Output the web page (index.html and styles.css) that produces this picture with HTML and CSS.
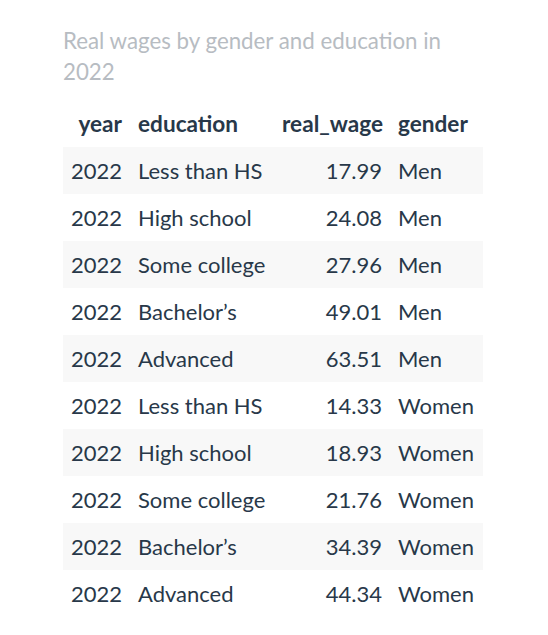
FILE: index.html
```html
<!DOCTYPE html>
<html>
<head>
<meta charset="utf-8">
<link rel="stylesheet" href="styles.css">
</head>
<body>
<div class="wrap">
  <div class="title">Real wages by gender and education in 2022</div>
  <table class="tbl">
    <colgroup>
      <col class="c-year"><col class="c-edu"><col class="c-wage"><col class="c-gender">
    </colgroup>
    <thead>
      <tr><th class="r">year</th><th class="l">education</th><th class="r">real_wage</th><th class="l">gender</th></tr>
    </thead>
    <tbody>
      <tr><td class="r">2022</td><td>Less than HS</td><td class="r">17.99</td><td>Men</td></tr>
      <tr><td class="r">2022</td><td>High school</td><td class="r">24.08</td><td>Men</td></tr>
      <tr><td class="r">2022</td><td>Some college</td><td class="r">27.96</td><td>Men</td></tr>
      <tr><td class="r">2022</td><td>Bachelor’s</td><td class="r">49.01</td><td>Men</td></tr>
      <tr><td class="r">2022</td><td>Advanced</td><td class="r">63.51</td><td>Men</td></tr>
      <tr><td class="r">2022</td><td>Less than HS</td><td class="r">14.33</td><td>Women</td></tr>
      <tr><td class="r">2022</td><td>High school</td><td class="r">18.93</td><td>Women</td></tr>
      <tr><td class="r">2022</td><td>Some college</td><td class="r">21.76</td><td>Women</td></tr>
      <tr><td class="r">2022</td><td>Bachelor’s</td><td class="r">34.39</td><td>Women</td></tr>
      <tr><td class="r">2022</td><td>Advanced</td><td class="r">44.34</td><td>Women</td></tr>
    </tbody>
  </table>
</div>
</body>
</html>
```
FILE: styles.css
```css
html, body { margin: 0; padding: 0; background: #fff; }
body { font-family: Lato, "Open Sans", sans-serif; color: #283849; }
.wrap { padding: 25px 0 0 63px; width: 420px; }
.title { font-size: 22.3px; line-height: 31px; color: #b7bcc2; margin-bottom: 13px; width: 400px; }
.tbl { border-collapse: collapse; font-size: 22px; width: 420px; table-layout: fixed; }
.c-year { width: 67px; }
.c-edu { width: 144px; }
.c-wage { width: 116px; }
.c-gender { width: 93px; }
.tbl th, .tbl td { padding: 8px 8px; line-height: 31px; white-space: nowrap; text-align: left; overflow: visible; }
.tbl th { font-weight: 700; font-size: 22.6px; }
.tbl .r { text-align: right; }
.tbl tbody tr:nth-child(odd) { background: #f8f8f8; }
```
